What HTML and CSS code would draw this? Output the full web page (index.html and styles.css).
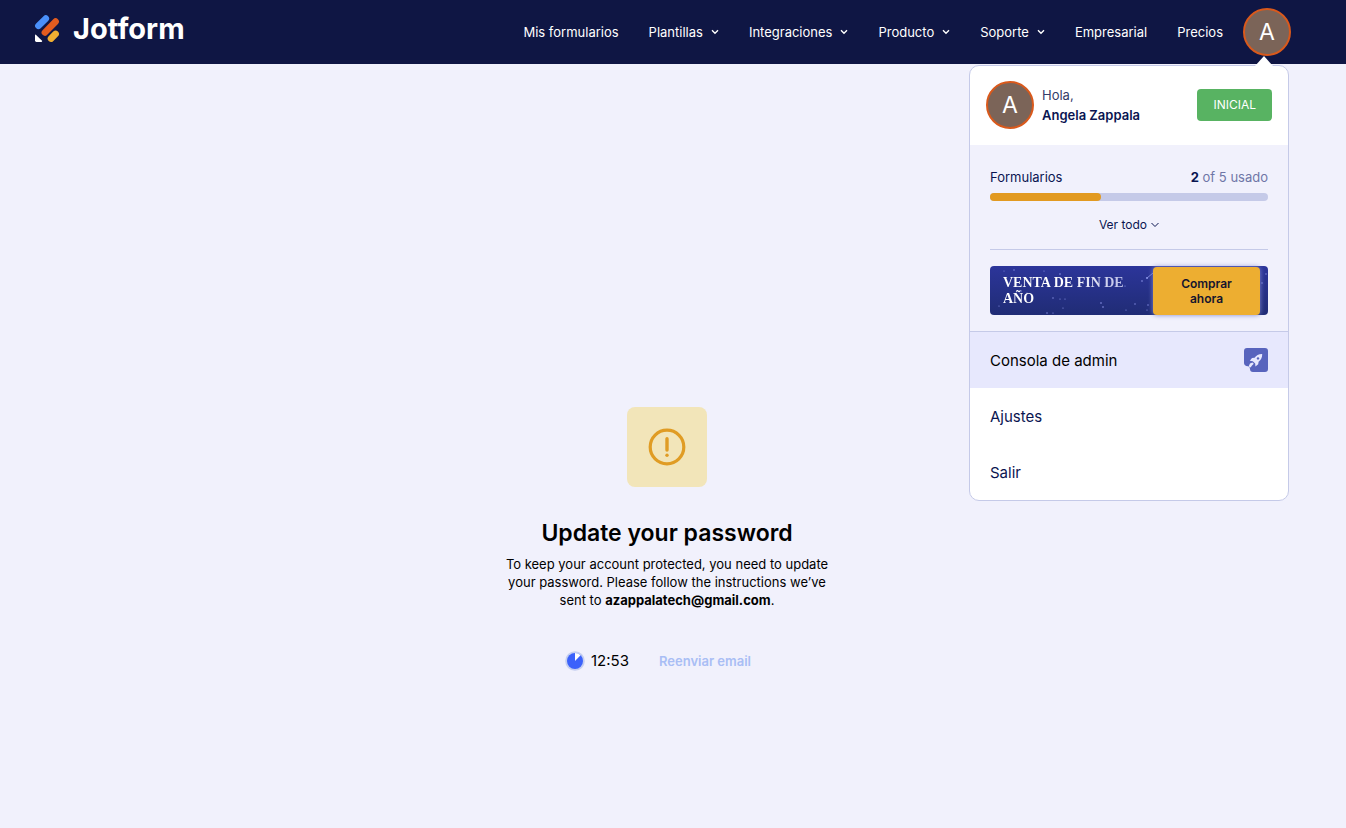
FILE: index.html
```html
<!DOCTYPE html>
<html lang="es">
<head>
  <meta charset="UTF-8" />
  <title>Jotform</title>
  <meta name="viewport" content="width=device-width, initial-scale=1.0" />
  <link rel="stylesheet" href="styles.css">
</head>
<body>
  <header class="header">
    <a class="logo" href="#">
      <svg class="logo-mark" viewBox="0 0 26 28" width="26" height="28" aria-hidden="true">
        <g fill="none" stroke-width="6.6" stroke-linecap="round">
          <path d="M4.4 10.8 L11.8 3.6" stroke="#4a90fa" />
          <path d="M10.9 17.5 L21.6 6.6" stroke="#e35c1f" />
          <path d="M17 23.6 L21.6 18.9" stroke="#f0ae32" />
        </g>
        <path d="M1 20.4 Q1 19 2.1 20 L7.8 25.6 Q8.8 27 7.4 27 H2.4 Q1 27 1 25.6 Z" fill="#fff" />
      </svg>
      <span class="logo-text">Jotform</span>
    </a>

    <nav class="nav">
      <a class="nav-link" href="#">Mis formularios</a>
      <button class="nav-link" type="button">Plantillas
        <svg class="chevron" viewBox="0 0 8 6" width="8" height="6"><path d="M1 1.2 L4 4.2 L7 1.2" /></svg>
      </button>
      <button class="nav-link" type="button">Integraciones
        <svg class="chevron" viewBox="0 0 8 6" width="8" height="6"><path d="M1 1.2 L4 4.2 L7 1.2" /></svg>
      </button>
      <button class="nav-link" type="button">Producto
        <svg class="chevron" viewBox="0 0 8 6" width="8" height="6"><path d="M1 1.2 L4 4.2 L7 1.2" /></svg>
      </button>
      <button class="nav-link" type="button">Soporte
        <svg class="chevron" viewBox="0 0 8 6" width="8" height="6"><path d="M1 1.2 L4 4.2 L7 1.2" /></svg>
      </button>
      <a class="nav-link" href="#">Empresarial</a>
      <a class="nav-link" href="#">Precios</a>
    </nav>

    <div class="account">
      <button class="avatar" type="button">A</button>

      <div class="account-menu">
        <div class="profile">
          <span class="avatar">A</span>
          <div class="profile-name">
            <span>Hola,</span>
            <strong>Angela Zappala</strong>
          </div>
          <a class="plan" href="#">INICIAL</a>
        </div>

        <div class="usage">
          <div class="usage-row">
            <span>Formularios</span>
            <span class="usage-count"><strong>2</strong> of 5 usado</span>
          </div>
          <div class="usage-bar">
            <div class="usage-fill" style="width: 40%"></div>
          </div>
          <button class="see-all" type="button">Ver todo
            <svg class="chevron" viewBox="0 0 8 6" width="8" height="6"><path d="M0.5 1 L4 4.5 L7.5 1" /></svg>
          </button>

          <div class="sale">
            <svg class="sale-stars" viewBox="0 0 278 49" width="278" height="49" aria-hidden="true">
              <g fill="#8d97ea">
                <circle cx="24" cy="4" r="0.7" /><circle cx="14" cy="5" r="0.5" />
                <circle cx="54" cy="5" r="0.6" /><circle cx="70" cy="8" r="0.8" />
                <circle cx="31" cy="25" r="0.7" /><circle cx="37" cy="27" r="0.5" />
                <circle cx="63" cy="32" r="0.7" /><circle cx="70" cy="33" r="0.6" />
                <circle cx="75" cy="33" r="0.6" /><circle cx="73" cy="42" r="0.6" />
                <circle cx="57" cy="47" r="0.7" /><circle cx="63" cy="47" r="0.6" />
                <circle cx="9" cy="40" r="0.6" /><circle cx="111" cy="37" r="0.8" />
                <circle cx="113" cy="41" r="0.8" /><circle cx="145" cy="38" r="0.7" />
                <circle cx="136" cy="44" r="0.6" /><circle cx="152" cy="15" r="0.8" />
                <circle cx="157" cy="12" r="1" /><circle cx="158" cy="39" r="0.7" />
                <circle cx="157" cy="44" r="0.6" /><circle cx="135" cy="20" r="0.6" />
                <circle cx="276" cy="8" r="0.7" /><circle cx="272" cy="17" r="0.7" />
              </g>
              <path d="M157 12 L163 7" stroke="#8d97ea" stroke-width="0.8" />
            </svg>
            <span class="sale-text">VENTA DE FIN DE AÑO</span>
            <button class="sale-button" type="button">Comprar<br>ahora</button>
          </div>
        </div>

        <a class="menu-item active" href="#">Consola de admin
          <svg viewBox="0 0 24 24" width="24" height="24" aria-hidden="true">
            <path d="M3 0 H21 Q24 0 24 3 V21 Q24 24 21 24 H9 Q6 24 6 21 Q6 18.5 4 18.3 Q0 18 0 15 V3 Q0 0 3 0 Z" fill="#5864bd" />
            <path d="M18.2 6 C14.8 5.9 12.3 7.4 10.6 9.7 L8 10 L5.8 12.8 L8.8 13.2 L11.2 15.6 L11.4 18.6 L14.2 16.2 L14.6 13.8 C17 12.1 18.3 9.6 18.2 6 Z" fill="#e7e8fd" />
            <circle cx="14" cy="10.4" r="1.2" fill="#5864bd" />
            <path d="M8.4 14.4 L6 15.6 L4.6 18.4 L6.6 19.6 L8 17.6 L9.8 15.8 Z" fill="#e7e8fd" />
          </svg>
        </a>
        <a class="menu-item" href="#">Ajustes</a>
        <a class="menu-item" href="#">Salir</a>
      </div>
    </div>
  </header>

  <main class="content">
    <div class="notice">
      <div class="notice-icon">
        <svg viewBox="0 0 38 38" width="38" height="38" aria-hidden="true">
          <circle cx="19" cy="19" r="16.8" fill="none" stroke="#e09c24" stroke-width="3.2" />
          <path d="M19 10.8 V22" stroke="#e09c24" stroke-width="3.4" stroke-linecap="round" />
          <circle cx="19" cy="27.2" r="1.7" fill="#e09c24" />
        </svg>
      </div>
      <h1>Update your password</h1>
      <p>To keep your account protected, you need to update your password. Please follow the instructions we’ve sent to <strong>azappalatech@gmail.com</strong>.</p>
      <div class="resend">
        <svg viewBox="0 0 20 20" width="20" height="20" aria-hidden="true">
          <circle cx="10" cy="10" r="9.8" fill="#c5cff0" />
          <circle cx="10" cy="10" r="8" fill="#3b62fb" />
          <path d="M10 10 V2 A8 8 0 0 1 15.6 4.3 Z" fill="#fff" />
        </svg>
        <span class="timer">12:53</span>
        <button class="resend-button" type="button" disabled>Reenviar email</button>
      </div>
    </div>
  </main>
</body>
</html>
```
FILE: styles.css
```css
* {
  box-sizing: border-box;
}

body {
  margin: 0;
  min-height: 100vh;
  display: flex;
  flex-direction: column;
  font-family: Inter, "Liberation Sans", sans-serif;
  font-size: 13px;
  color: #0a1551;
  background: #f1f1fc;
}

a {
  color: inherit;
  text-decoration: none;
}

button {
  border: none;
  padding: 0;
  background: none;
  color: inherit;
  font: inherit;
  cursor: pointer;
}

.header {
  height: 64px;
  padding: 0 55px 0 34px;
  display: flex;
  align-items: center;
  background: #0f1644;
  color: #fff;
}

.logo {
  display: flex;
  align-items: center;
  gap: 13px;
  margin-right: auto;
  padding-bottom: 6px;
}

.logo-text {
  font-size: 29px;
  font-weight: 700;
  line-height: 34px;
}

.nav {
  display: flex;
  gap: 30px;
  margin-right: 20px;
}

.nav-link {
  display: flex;
  align-items: center;
  gap: 8px;
  line-height: 20px;
  white-space: nowrap;
}

.chevron {
  fill: none;
  stroke: currentColor;
  stroke-width: 1.4;
}

.account {
  position: relative;
}

.avatar {
  width: 48px;
  height: 48px;
  flex: none;
  display: flex;
  align-items: center;
  justify-content: center;
  border: 2px solid #d9591c;
  border-radius: 50%;
  background: #7b6458;
  color: #fff;
  font-size: 23px;
}

/* account dropdown */
.account-menu {
  position: absolute;
  top: 57px;
  right: 2px;
  width: 320px;
  border: 1px solid #c5cae8;
  border-radius: 10px;
  background: #fff;
  color: #0a1551;
}

.account-menu::before {
  content: "";
  position: absolute;
  top: -10px;
  right: 15px;
  border: 9px solid transparent;
  border-top: 0;
  border-bottom: 10px solid #fff;
}

.profile {
  display: flex;
  align-items: center;
  gap: 8px;
  padding: 15px 16px 16px;
}

.profile-name {
  display: flex;
  flex-direction: column;
  flex: 1;
  line-height: 20px;
}

.profile-name span {
  color: #343c6a;
}

.profile-name strong {
  font-weight: 600;
}

.plan {
  padding: 0 16px;
  border-radius: 4px;
  background: #58b362;
  color: #fff;
  font-size: 12px;
  line-height: 32px;
}

.usage {
  padding: 24px 20px 16px;
  border-bottom: 1px solid #c5cae8;
  background: #f1f1fc;
}

.usage-row {
  display: flex;
  justify-content: space-between;
  line-height: 16px;
  margin-bottom: 8px;
}

.usage-count {
  color: #6f76a7;
}

.usage-count strong {
  color: #0a1551;
}

.usage-bar {
  height: 8px;
  border-radius: 4px;
  background: #c5cae8;
}

.usage-fill {
  height: 8px;
  border-radius: 4px;
  background: #e29a21;
}

.see-all {
  display: flex;
  align-items: center;
  justify-content: center;
  gap: 4px;
  width: 100%;
  padding: 16px 0;
  border-bottom: 1px solid #c5cae8;
  font-size: 12px;
  line-height: 16px;
}

.see-all .chevron {
  stroke-width: 1;
}

.sale {
  position: relative;
  display: flex;
  align-items: center;
  justify-content: space-between;
  margin-top: 16px;
  padding: 1px 8px 0 13px;
  border-radius: 4px;
  background: linear-gradient(#2c359a, #202c75);
}

.sale-stars {
  position: absolute;
  top: 0;
  left: 0;
}

.sale-text {
  position: relative;
  width: 128px;
  font-family: "Liberation Serif", serif;
  font-size: 14px;
  font-weight: 700;
  line-height: 16px;
  color: transparent;
  background: linear-gradient(90deg, #fff 50%, #b4b8e4);
  background-clip: text;
}

.sale-button {
  position: relative;
  width: 107px;
  height: 48px;
  border-radius: 4px;
  background: #edae31;
  box-shadow: 0 0 5px #8188d0;
  color: #15152e;
  font-size: 12px;
  font-weight: 600;
  line-height: 15px;
}

.menu-item {
  display: flex;
  align-items: center;
  justify-content: space-between;
  height: 56px;
  padding: 0 20px;
  font-size: 15px;
}

.menu-item.active {
  background: #e7e8fd;
  color: #000;
}

/* password notice */
.content {
  flex: 1;
  display: flex;
  align-items: center;
  justify-content: center;
  padding: 186px 12px 0 0;
}

.notice {
  width: 340px;
  display: flex;
  flex-direction: column;
  align-items: center;
  text-align: center;
  color: #000;
}

.notice-icon {
  width: 80px;
  height: 80px;
  display: flex;
  align-items: center;
  justify-content: center;
  border-radius: 8px;
  background: #f2e5b9;
}

.notice h1 {
  margin: 30px 0 6px;
  font-size: 23px;
  font-weight: 600;
  line-height: 32px;
  white-space: nowrap;
}

.notice p {
  margin: 0;
  line-height: 18px;
}

.notice p strong {
  font-weight: 700;
}

.resend {
  display: flex;
  align-items: center;
  margin-top: 42px;
  margin-right: 18px;
  line-height: 20px;
}

.timer {
  margin: 0 30px 0 6px;
  font-size: 15px;
}

.resend-button {
  color: #a9bef5;
  font-weight: 600;
  cursor: default;
}
```
